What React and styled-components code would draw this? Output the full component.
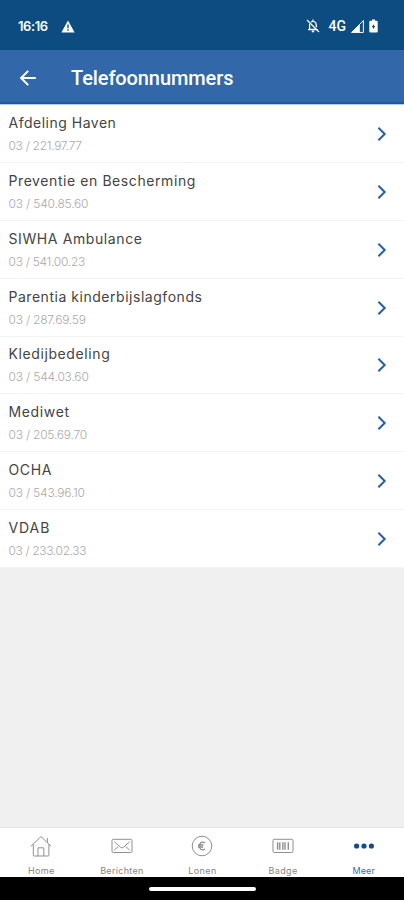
import styled, { createGlobalStyle } from 'styled-components'

const GlobalStyle = createGlobalStyle`
  * {
    box-sizing: border-box;
  }
  body {
    margin: 0;
    background: #f0f0f0;
    font-family: Inter, sans-serif;
  }
`

const contacts = [
  { name: 'Afdeling Haven', nameTracking: 0.5, phone: '03 / 221.97.77', phoneTracking: -0.3 },
  { name: 'Preventie en Bescherming', nameTracking: 0.58, phone: '03 / 540.85.60', phoneTracking: -0.18 },
  { name: 'SIWHA Ambulance', nameTracking: 0.6, phone: '03 / 541.00.23', phoneTracking: -0.28 },
  { name: 'Parentia kinderbijslagfonds', nameTracking: 0.53, phone: '03 / 287.69.59', phoneTracking: -0.22 },
  { name: 'Kledijbedeling', nameTracking: 0.6, phone: '03 / 544.03.60', phoneTracking: -0.18 },
  { name: 'Mediwet', nameTracking: 0.65, phone: '03 / 205.69.70', phoneTracking: -0.22 },
  { name: 'OCHA', nameTracking: 0.6, phone: '03 / 543.96.10', phoneTracking: -0.2 },
  { name: 'VDAB', nameTracking: 0.9, phone: '03 / 233.02.33', phoneTracking: -0.36 },
]

const StyledScreen = styled.div`
  width: 404px;
  height: 900px;
  display: flex;
  flex-direction: column;
  overflow: hidden;
  background: #f0f0f0;
`

const StyledStatusBar = styled.div`
  height: 50px;
  flex-shrink: 0;
  padding: 2px 26px 0 18px;
  display: flex;
  align-items: center;
  justify-content: space-between;
  background: #0d4c80;
  color: #fff;
`

const StyledStatusGroup = styled.div`
  display: flex;
  align-items: center;
  gap: ${({ $gap }) => $gap}px;
  & svg {
    display: block;
  }
`

const StyledClock = styled.span`
  font-size: 13px;
  font-weight: 600;
  line-height: 16px;
  letter-spacing: -0.4px;
`

const StyledNetwork = styled.span`
  margin-left: 4px;
  font: 500 14px/16px Roboto, sans-serif;
`

const StyledHeader = styled.header`
  height: 54px;
  flex-shrink: 0;
  padding: 3px 0 0 18px;
  display: flex;
  align-items: center;
  gap: 33px;
  background: #3268a9;
  border-bottom: 2px solid #1859a3;
  color: #fff;
`

const StyledTitle = styled.h1`
  margin: 0;
  font: 500 20px/24px Roboto, sans-serif;
  letter-spacing: -0.1px;
`

const StyledList = styled.ul`
  margin: 0;
  padding: 0;
  list-style: none;
  flex: 1;
  border-top: 1px solid #b9cfe9;
`

const StyledRow = styled.li`
  height: 57.75px;
  padding: 0.5px 16px 0 8.5px;
  display: flex;
  align-items: center;
  justify-content: space-between;
  background: #fff;
  border-bottom: 1px solid #f3f3f3;
  &:first-child {
    height: 58.4px;
  }
`

const StyledName = styled.p`
  margin: 0;
  font-size: 14px;
  line-height: 20px;
  color: #444;
  white-space: nowrap;
  letter-spacing: ${({ $tracking }) => $tracking}px;
`

const StyledPhone = styled.p`
  margin: 3px 0 0;
  font-size: 12px;
  font-weight: 300;
  line-height: 19px;
  color: #aaa;
  white-space: nowrap;
  letter-spacing: ${({ $tracking }) => $tracking}px;
`

const StyledTabBar = styled.nav`
  height: 50px;
  flex-shrink: 0;
  padding-left: 1px;
  display: grid;
  grid-template-columns: repeat(5, 1fr);
  background: #fff;
  border-top: 1px solid #e6e6e6;
`

const StyledTab = styled.div`
  display: flex;
  flex-direction: column;
  align-items: center;
  padding-top: 6px;
  color: ${({ $active }) => ($active ? '#124a93' : '#8f8f8f')};
  & svg {
    display: block;
  }
`

const StyledTabLabel = styled.span`
  margin-top: 7px;
  font-size: 9px;
  line-height: 12px;
  letter-spacing: ${({ $tracking }) => $tracking}px;
  color: ${({ $active }) => ($active ? '#3f68a8' : '#858585')};
`

const StyledGestureBar = styled.div`
  height: 23px;
  flex-shrink: 0;
  display: flex;
  align-items: center;
  justify-content: center;
  background: #000;
`

const StyledPill = styled.div`
  width: 107px;
  height: 4px;
  border-radius: 2px;
  background: #fff;
`

const WarningIcon = () => (
  <svg width="14" height="13" viewBox="0 0 14 13">
    <path d="M7 0.5L13.6 12.4H0.4Z" fill="#fff" />
    <path d="M7 4.6v3.6M7 9.3v1.4" stroke="#0d4c80" strokeWidth="1.4" />
  </svg>
)

const MutedIcon = () => (
  <svg width="14" height="14" viewBox="0 0 14 14" fill="none" stroke="#fff" strokeWidth="1.3">
    <path d="M1 1L13 13" />
    <path d="M3.6 4.7V10.5H10.5M2 10.6H11.6M5 2.9C7.5 1.5 10.3 3 10.3 6V8.2M7 0.6V2.3" />
    <path d="M5.8 12.4H8.2" strokeWidth="1.8" />
  </svg>
)

const SignalIcon = () => (
  <svg width="13" height="13" viewBox="0 0 13 13">
    <path d="M0.6 12.4L12.4 0.6V12.4Z" fill="none" stroke="#fff" strokeWidth="1" />
    <path d="M0.4 12.6L8.8 4.2V12.6Z" fill="#fff" />
  </svg>
)

const BatteryIcon = () => (
  <svg width="9" height="14" viewBox="0 0 9 14">
    <path d="M3 0.4H6V1.8H7.4Q8.7 1.8 8.7 3.1V12.2Q8.7 13.5 7.4 13.5H1.6Q0.3 13.5 0.3 12.2V3.1Q0.3 1.8 1.6 1.8H3Z" fill="#fff" />
    <path d="M4.5 5.8V9.4M3.1 7.6H5.9" stroke="#0d4c80" strokeWidth="1.2" />
  </svg>
)

const BackIcon = () => (
  <svg width="20" height="20" viewBox="0 0 20 20" fill="none" stroke="#fff" strokeWidth="2">
    <path d="M17.8 10H3.6M10.2 2.9L3.1 10L10.2 17.1" />
  </svg>
)

const ChevronIcon = () => (
  <svg width="12" height="16" viewBox="0 0 12 16" fill="none" stroke="#285fa5" strokeWidth="2">
    <path d="M2.4 1.7L8.7 8L2.4 14.3" />
  </svg>
)

const TabIcon = ({ children }) => (
  <svg width="24" height="24" viewBox="0 0 24 24" fill="none" stroke="currentColor" strokeWidth="1">
    {children}
  </svg>
)

const tabs = [
  {
    label: 'Home',
    tracking: 0.4,
    icon: (
      <TabIcon>
        <path d="M2 12.2L12 2.6L22 12.2M4.3 10.2V21.3Q4.3 22 5 22H19.2Q19.9 22 19.9 21.3V10.2M18.4 8.5V4.2" />
        <path d="M9 22V13.8H14.8V22" />
      </TabIcon>
    ),
  },
  {
    label: 'Berichten',
    tracking: 0.3,
    icon: (
      <TabIcon>
        <rect x="2" y="5.3" width="20" height="13.2" rx="1.2" />
        <path d="M4.3 7.7L10.8 13.4Q12 14.4 13.2 13.4L19.7 7.7M4.3 16.2L8.3 12.5M19.7 16.2L15.7 12.5" />
      </TabIcon>
    ),
  },
  {
    label: 'Lonen',
    tracking: 0.4,
    icon: (
      <TabIcon>
        <circle cx="12" cy="12" r="9.8" />
        <path d="M15 8.9Q12.3 7.3 10.3 9.3Q8.4 12 10.3 14.7Q12.3 16.7 15 15.1M8 11H13.4M8 13H13.2" strokeWidth="1.3" />
      </TabIcon>
    ),
  },
  {
    label: 'Badge',
    tracking: 0.4,
    icon: (
      <TabIcon>
        <rect x="2" y="5.3" width="20" height="13.2" rx="1.2" />
        <path d="M6.6 8.3V15.7M8.8 8.3V15.7M11.8 8.3V15.7M14 8.3V15.7M17.3 8.3V15.7" strokeWidth="1.4" />
      </TabIcon>
    ),
  },
  {
    label: 'Meer',
    tracking: 0.1,
    active: true,
    icon: (
      <TabIcon>
        <g fill="currentColor" stroke="none">
          <circle cx="4.6" cy="12" r="2.6" />
          <circle cx="12" cy="12" r="2.6" />
          <circle cx="19.4" cy="12" r="2.6" />
        </g>
      </TabIcon>
    ),
  },
]

function App() {
  return (
    <StyledScreen>
      <GlobalStyle />
      <StyledStatusBar>
        <StyledStatusGroup $gap={13}>
          <StyledClock>16:16</StyledClock>
          <WarningIcon />
        </StyledStatusGroup>
        <StyledStatusGroup $gap={5}>
          <MutedIcon />
          <StyledNetwork>4G</StyledNetwork>
          <SignalIcon />
          <BatteryIcon />
        </StyledStatusGroup>
      </StyledStatusBar>
      <StyledHeader>
        <BackIcon />
        <StyledTitle>Telefoonnummers</StyledTitle>
      </StyledHeader>
      <StyledList>
        {contacts.map((contact) => (
          <StyledRow key={contact.name}>
            <div>
              <StyledName $tracking={contact.nameTracking}>{contact.name}</StyledName>
              <StyledPhone $tracking={contact.phoneTracking}>{contact.phone}</StyledPhone>
            </div>
            <ChevronIcon />
          </StyledRow>
        ))}
      </StyledList>
      <StyledTabBar>
        {tabs.map((tab) => (
          <StyledTab key={tab.label} $active={tab.active}>
            {tab.icon}
            <StyledTabLabel $tracking={tab.tracking} $active={tab.active}>{tab.label}</StyledTabLabel>
          </StyledTab>
        ))}
      </StyledTabBar>
      <StyledGestureBar>
        <StyledPill />
      </StyledGestureBar>
    </StyledScreen>
  )
}

export default App
